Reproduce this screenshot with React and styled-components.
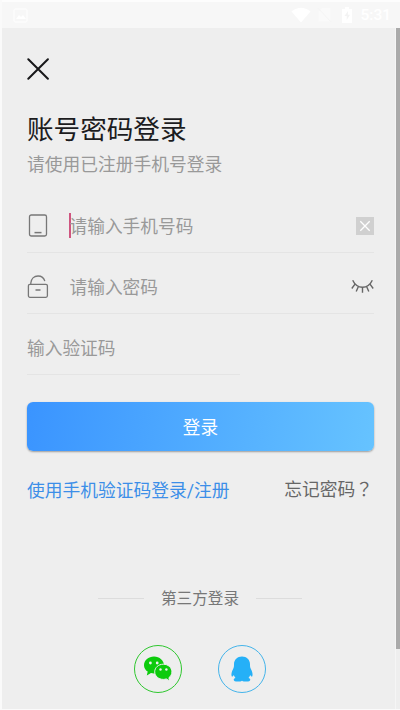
import React from 'react'
import styled, { createGlobalStyle } from 'styled-components'

const GlobalStyle = createGlobalStyle`
    * {
        box-sizing: border-box;
    }

    body {
        margin: 0;
        background: #eeeeee;
        font-family: Roboto, 'Noto Sans CJK SC', sans-serif;
    }
`

const StyledScreen = styled.div`
    display: flex;
    flex-direction: column;
    width: 400px;
    height: 710px;
    overflow: hidden;
    background: #eeeeee;
    border-left: 2px solid #fafafa;
    border-bottom: 1px solid #fafafa;
`

const StyledStatusBar = styled.header`
    display: flex;
    align-items: center;
    height: 28px;
    flex: none;
    padding: 0 9px 0 11px;
    background: #f7f7f7;
    border-top: 2px solid #fdfdfd;
    color: #ffffff;
`

const StyledStatusIcons = styled.div`
    display: flex;
    align-items: center;
    margin-left: auto;
`

const StyledClock = styled.span`
    margin-left: 7px;
    font-size: 15.5px;
    line-height: 20px;
    font-weight: 500;
`

const StyledBody = styled.div`
    display: flex;
    flex: 1;
    min-height: 0;
`

const StyledContent = styled.main`
    display: flex;
    flex-direction: column;
    flex: 1;
    padding: 30px 21px 0 25px;
`

const StyledScrollTrack = styled.div`
    width: 5px;
    border-left: 1px solid #f5f5f5;
`

const StyledScrollThumb = styled.div`
    height: 621px;
    background: #aaaaaa;
`

const StyledClose = styled.button`
    width: 22px;
    height: 22px;
    padding: 0;
    border: none;
    background: none;

    svg {
        display: block;
    }
`

const StyledTitle = styled.h1`
    margin: 30px 0 0;
    font-size: 26.6px;
    font-weight: 400;
    line-height: 40px;
    color: #1c1c1e;
`

const StyledSubtitle = styled.p`
    margin: 2px 0 14px;
    font-size: 17.75px;
    line-height: 26px;
    color: #999999;
`

const StyledField = styled.div`
    display: flex;
    align-items: center;
    width: ${({ $width }) => $width || '100%'};
    height: 61px;
    padding-top: 7px;
    border-bottom: 1px solid #e4e4e4;

    > svg {
        flex: none;
    }
`

const StyledFieldIcon = styled.div`
    display: flex;
    width: 42.5px;
`

const StyledPlaceholder = styled.span`
    flex: 1;
    padding-top: 3px;
    font-size: 17.7px;
    line-height: 26px;
    color: #999999;
`

const StyledCaret = styled.i`
    width: 2px;
    height: 25px;
    margin: 0 -1px;
    background: #cf5580;
`

const StyledClear = styled.div`
    display: flex;
    align-items: center;
    justify-content: center;
    width: 18px;
    height: 18px;
    background: #d0d0d0;
`

const StyledLogin = styled.button`
    flex: none;
    height: 49px;
    margin-top: 27px;
    padding: 0 0 2px;
    border: none;
    border-radius: 6px;
    background: linear-gradient(100deg, #3a94ff, #66c3ff);
    box-shadow: 0 1px 2px rgba(0, 0, 0, 0.35);
    color: #ffffff;
    font-family: inherit;
    font-size: 17.7px;
    font-weight: 400;
`

const StyledLinks = styled.div`
    display: flex;
    align-items: flex-start;
    justify-content: space-between;
    height: 27px;
    margin-top: 26px;
    padding-right: 1px;
    font-size: 17.75px;
    line-height: 26px;
`

const StyledLink = styled.a`
    padding-top: ${({ $primary }) => ($primary ? '1px' : '0')};
    color: ${({ $primary }) => ($primary ? '#3c8ee8' : '#666666')};
`

const StyledMark = styled.span`
    font-family: 'Noto Sans CJK TC', sans-serif;
    line-height: 0;
`

const StyledDivider = styled.div`
    display: flex;
    align-items: flex-start;
    justify-content: center;
    gap: 17px;
    margin: 83px 1px 0 0;
    font-size: 15.6px;
    line-height: 24px;
    color: #777777;

    &::before,
    &::after {
        content: '';
        width: 46px;
        height: 1px;
        margin-top: 11px;
        background: #dcdcdc;
    }
`

const StyledSocials = styled.div`
    display: flex;
    justify-content: center;
    gap: 36px;
    margin: 34px 1px 0 0;
`

const StyledSocial = styled.button`
    display: flex;
    align-items: center;
    justify-content: center;
    width: 48px;
    height: 48px;
    padding: 0;
    border: 1.5px solid ${({ $color }) => $color};
    border-radius: 50%;
    background: none;
`

const PictureIcon = () => (
    <svg width='15' height='15' viewBox='0 0 15 15' fill='none' stroke='#fff'>
        <rect x='1' y='1' width='13' height='13' rx='1' />
        <path d='M3 11l3-4 2 2 2-2 3 4z' fill='#fff' stroke='none' />
    </svg>
)

const WifiIcon = () => (
    <svg width='20' height='16' viewBox='0 0 20 16' fill='#fff'>
        <path d='M0.5 4.5Q10-3 19.500 4.500L10 15.500z' />
    </svg>
)

const StyledNoSimIcon = styled.svg`
    margin-left: 6px;
`

const NoSimIcon = () => (
    <StyledNoSimIcon width='15' height='16' viewBox='0 0 15 16'>
        <path d='M5 1h8.500v13.500H1.500V5z' fill='#fafafa' />
        <path d='M1 1l13 14' stroke='#f5f5f5' />
    </StyledNoSimIcon>
)

const StyledBatteryIcon = styled.svg`
    margin-left: 9px;
`

const BatteryIcon = () => (
    <StyledBatteryIcon width='12' height='16' viewBox='0 0 12 16'>
        <path d='M4 0h4v2h3v14H1V2h3z' fill='#fff' />
        <path d='M7 4L3.500 9h2.200v4L9 7.800H6.800z' fill='#f3f3f3' />
    </StyledBatteryIcon>
)

const CloseIcon = () => (
    <svg width='22' height='22' viewBox='0 0 22 22' fill='none' stroke='#18181a' strokeWidth='2' strokeLinecap='round'>
        <path d='M1.300 1.200l19.600 19.600M20.900 1.200L1.300 20.800' />
    </svg>
)

const PhoneIcon = () => (
    <svg width='22' height='24' viewBox='0 0 22 24' fill='none' stroke='#777' strokeWidth='1.3'>
        <rect x='2.500' y='1' width='17' height='21' rx='1.800' />
        <path d='M7.500 18.600h7' strokeWidth='1.500' />
    </svg>
)

const LockIcon = () => (
    <svg width='22' height='24' viewBox='0 0 22 24' fill='none' stroke='#777' strokeWidth='1.3'>
        <rect x='1.400' y='9.300' width='19' height='13' rx='1.500' />
        <path d='M3.800 9.300V8C4.200 4 7 1 11 1c3.600 0 6 2 6.800 5.200M8.500 15h5' />
    </svg>
)

const ClearIcon = () => (
    <svg width='12' height='12' viewBox='0 0 12 12' stroke='#fff' strokeWidth='1.3'>
        <path d='M1.300 1.300l9.400 9.400M10.700 1.300l-9.400 9.400' />
    </svg>
)

const ClosedEyeIcon = () => (
    <svg width='23' height='15' viewBox='0 0 23 15' fill='none' stroke='#666' strokeWidth='1.4'>
        <path d='M1.700 1.200C6 10.500 17 10.500 21.300 1.200' />
        <path d='M4 5.200L.8 9.500M7.300 7.700L5.200 12.500M11.500 8.200v5.600M15.700 7.700l2.100 4.800M19 5.200l3.200 4.300' />
    </svg>
)

const WechatIcon = () => (
    <svg width='30' height='26' viewBox='0 0 30 26'>
        <path
            d='M11 .5C5.500.5 1 4.300 1 9.200c0 2.600 1.400 4.900 3.700 6.400l-.9 4 4.200-2.600c1 .3 2 .4 3 .4 5.600 0 10-3.700 10-8.200S16.600.5 11 .5z'
            fill='#0ccb0c'
        />
        <path
            d='M20.300 8.200c-4.800 0-8.600 3.400-8.600 7.600s3.800 7.600 8.600 7.600c1.100 0 2.100-.2 3-.5l3.300 2.100-.7-3.300c1.900-1.400 3-3.500 3-5.900 0-4.200-3.800-7.600-8.600-7.600z'
            fill='#0ccb0c'
            stroke='#eee'
            strokeWidth='1'
        />
        <g fill='#eee'>
            <circle cx='7.400' cy='7' r='1.400' />
            <circle cx='14.200' cy='7' r='1.400' />
            <circle cx='17.500' cy='13.500' r='1.200' />
            <circle cx='23.400' cy='13.500' r='1.200' />
        </g>
    </svg>
)

const QQIcon = () => (
    <svg width='22' height='26' viewBox='0 0 22 26' fill='#25b0f7'>
        <path d='M11 .5C6.300.5 3 3.800 3 8.200c0 2.200-.1 3.400-1 5C.7 15.600 0 18.500.7 20.300c.4.800 1.300.1 2.100-1.200.3 1.100.9 2 1.700 2.800-1.200.4-1.800 1-1.800 1.800 0 1.300 1.600 1.900 4 1.900 1.800 0 3.300-.3 4.300-.9 1 .6 2.500.9 4.300.9 2.400 0 4-.6 4-1.900 0-.8-.6-1.400-1.800-1.800.8-.8 1.400-1.700 1.700-2.800.8 1.300 1.700 2 2.100 1.200.7-1.800 0-4.700-1.300-7.100-.9-1.600-1-2.800-1-5C19 3.800 15.700.5 11 .5z' />
    </svg>
)

const App = () => {
    return (
        <>
            <GlobalStyle />
            <StyledScreen>
                <StyledStatusBar>
                    <PictureIcon />
                    <StyledStatusIcons>
                        <WifiIcon />
                        <NoSimIcon />
                        <BatteryIcon />
                        <StyledClock>5:31</StyledClock>
                    </StyledStatusIcons>
                </StyledStatusBar>
                <StyledBody>
                    <StyledContent>
                        <StyledClose>
                            <CloseIcon />
                        </StyledClose>
                        <StyledTitle>账号密码登录</StyledTitle>
                        <StyledSubtitle>请使用已注册手机号登录</StyledSubtitle>
                        <StyledField>
                            <StyledFieldIcon>
                                <PhoneIcon />
                            </StyledFieldIcon>
                            <StyledCaret />
                            <StyledPlaceholder>请输入手机号码</StyledPlaceholder>
                            <StyledClear>
                                <ClearIcon />
                            </StyledClear>
                        </StyledField>
                        <StyledField>
                            <StyledFieldIcon>
                                <LockIcon />
                            </StyledFieldIcon>
                            <StyledPlaceholder>请输入密码</StyledPlaceholder>
                            <ClosedEyeIcon />
                        </StyledField>
                        <StyledField $width='213px'>
                            <StyledPlaceholder>输入验证码</StyledPlaceholder>
                        </StyledField>
                        <StyledLogin>登录</StyledLogin>
                        <StyledLinks>
                            <StyledLink $primary>使用手机验证码登录/注册</StyledLink>
                            <StyledLink>
                                忘记密码<StyledMark>？</StyledMark>
                            </StyledLink>
                        </StyledLinks>
                        <StyledDivider>第三方登录</StyledDivider>
                        <StyledSocials>
                            <StyledSocial $color='#2fc72f'>
                                <WechatIcon />
                            </StyledSocial>
                            <StyledSocial $color='#45b4ea'>
                                <QQIcon />
                            </StyledSocial>
                        </StyledSocials>
                    </StyledContent>
                    <StyledScrollTrack>
                        <StyledScrollThumb />
                    </StyledScrollTrack>
                </StyledBody>
            </StyledScreen>
        </>
    )
}

export default App
